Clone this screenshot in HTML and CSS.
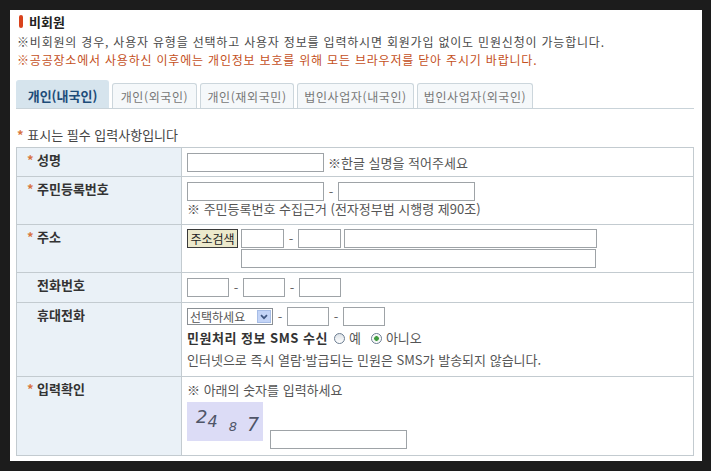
FILE: index.html
```html
<!DOCTYPE html>
<html lang="ko">
<head>
    <meta charset="UTF-8">
    <meta name="viewport" content="width=device-width, initial-scale=1.0">
    <title>비회원 민원신청</title>
    <link rel="stylesheet" href="styles.css">
</head>
<body>
    <div class="page">
        <h2 class="title"><span class="bullet"></span>비회원</h2>
        <p class="notice first">※비회원의 경우, 사용자 유형을 선택하고 사용자 정보를 입력하시면 회원가입 없이도 민원신청이 가능합니다.</p>
        <p class="notice warn">※공공장소에서 사용하신 이후에는 개인정보 보호를 위해 모든 브라우저를 닫아 주시기 바랍니다.</p>

        <ul class="tabs">
            <li class="tab active">개인(내국인)</li>
            <li class="tab">개인(외국인)</li>
            <li class="tab">개인(재외국민)</li>
            <li class="tab">법인사업자(내국인)</li>
            <li class="tab">법인사업자(외국인)</li>
        </ul>

        <p class="required"><span class="star">*</span> 표시는 필수 입력사항입니다</p>

        <div class="form">
            <!-- 성명 -->
            <div class="label"><span class="star">*</span>성명</div>
            <div class="field">
                <div class="line">
                    <input class="text w137" type="text">
                    <span class="hint">※한글 실명을 적어주세요</span>
                </div>
            </div>

            <!-- 주민등록번호 -->
            <div class="label"><span class="star">*</span>주민등록번호</div>
            <div class="field">
                <div class="line">
                    <input class="text w137" type="text">
                    <span class="dash">-</span>
                    <input class="text w137" type="password">
                </div>
                <div class="sub">※ 주민등록번호 수집근거 (전자정부법 시행령 제90조)</div>
            </div>

            <!-- 주소 -->
            <div class="label"><span class="star">*</span>주소</div>
            <div class="field tight">
                <div class="line">
                    <button class="btn" type="button">주소검색</button>
                    <input class="text w43" type="text">
                    <span class="dash">-</span>
                    <input class="text w43" type="text">
                    <input class="text w253 gap" type="text">
                </div>
                <div class="line second">
                    <input class="text w355" type="text">
                </div>
            </div>

            <!-- 전화번호 -->
            <div class="label"><span class="star none"></span>전화번호</div>
            <div class="field">
                <div class="line">
                    <input class="text w42" type="text">
                    <span class="dash">-</span>
                    <input class="text w42" type="text">
                    <span class="dash">-</span>
                    <input class="text w42" type="text">
                </div>
            </div>

            <!-- 휴대전화 -->
            <div class="label"><span class="star none"></span>휴대전화</div>
            <div class="field tight">
                <div class="line">
                    <span class="select">
                        <select>
                            <option>선택하세요</option>
                            <option>010</option>
                            <option>011</option>
                            <option>016</option>
                            <option>017</option>
                            <option>018</option>
                            <option>019</option>
                        </select>
                        <span class="arrow">
                            <svg width="8" height="6" viewBox="0 0 8 6"><polyline points="1,1.2 4,4.2 7,1.2" fill="none" stroke="#3f5680" stroke-width="1.7"/></svg>
                        </span>
                    </span>
                    <span class="dash">-</span>
                    <input class="text w42" type="text">
                    <span class="dash">-</span>
                    <input class="text w42" type="text">
                </div>
                <div class="sms">
                    <strong>민원처리 정보 SMS 수신</strong>
                    <label class="opt"><input class="radio" type="radio" name="sms">예</label>
                    <label class="opt"><input class="radio" type="radio" name="sms" checked>아니오</label>
                </div>
                <div class="sms-note">인터넷으로 즉시 열람·발급되는 민원은 SMS가 발송되지 않습니다.</div>
            </div>

            <!-- 입력확인 -->
            <div class="label"><span class="star">*</span>입력확인</div>
            <div class="field">
                <div class="sub">※ 아래의 숫자를 입력하세요</div>
                <div class="captcha-row">
                    <div class="captcha">
                        <span class="d1">2</span>
                        <span class="d2">4</span>
                        <span class="d3">8</span>
                        <span class="d4">7</span>
                    </div>
                    <input class="text w137 captcha-input" type="text">
                </div>
            </div>
        </div>
    </div>
</body>
</html>
```

FILE: styles.css
```css
body {
    margin: 0;
    padding: 10px 9px 10px 10px;
    background-color: #1c1c1c;
    font-family: "Noto Sans CJK KR", "Noto Sans", sans-serif;
    font-size: 13px;
    color: #555;
}
.page {
    width: 692px;
    height: 451px;
    box-sizing: border-box;
    padding: 1px 8px 0 6px;
    background-color: #fff;
}
.title {
    display: flex;
    align-items: center;
    height: 20px;
    margin: 0;
    font-size: 13px;
    font-weight: bold;
    color: #222;
}
.title .bullet {
    width: 4px;
    height: 13px;
    margin: 0 6px 0 3px;
    border-radius: 2px;
    background-color: #d9421c;
}
.notice {
    margin: 0;
    padding-left: 1px;
    font-size: 12px;
    line-height: 18px;
    letter-spacing: 0.8px;
    color: #4a4a4a;
}
.notice.first {
    margin-top: 2px;
}
.notice.warn {
    color: #c4501c;
}

/* tabs */
.tabs {
    display: flex;
    align-items: flex-end;
    gap: 3px;
    height: 28px;
    margin: 11px 0 0;
    padding: 0;
    list-style: none;
    border-bottom: 1px solid #c9d3d9;
}
.tab {
    box-sizing: border-box;
    height: 25px;
    padding-top: 2px;
    font-size: 12px;
    line-height: 22px;
    letter-spacing: 0.6px;
    text-align: center;
    border: 1px solid #ccd6dc;
    border-bottom: none;
    border-radius: 3px 3px 0 0;
    background-color: #f5f8fa;
    color: #777;
}
.tab:nth-child(1) { width: 93px; }
.tab:nth-child(2) { width: 85px; }
.tab:nth-child(3) { width: 94px; }
.tab:nth-child(4) { width: 117px; }
.tab:nth-child(5) { width: 116px; }
.tab.active {
    height: 28px;
    padding-top: 4px;
    font-size: 13px;
    letter-spacing: 0;
    border-color: #d6e4ed;
    background-color: #d6e4ed;
    color: #1d4c79;
    font-weight: bold;
}

.required {
    margin: 18px 0 4px 1px;
    line-height: 16px;
    color: #444;
}
.star {
    color: #d8743e;
    font-weight: bold;
}

/* form */
.form {
    display: grid;
    grid-template-columns: 165px 1fr;
    grid-template-rows: 29px 48px 48px 30px 74px 79px;
    border: 1px solid #c3cbd0;
    border-bottom: none;
}
.label,
.field {
    box-sizing: border-box;
    border-bottom: 1px solid #c3cbd0;
    line-height: 16px;
}
.label {
    padding: 4px 0 0 10px;
    border-right: 1px solid #c3cbd0;
    background-color: #eaf1f7;
    color: #333;
    font-weight: bold;
}
.label .star {
    display: inline-block;
    width: 10px;
}
.field {
    padding: 5px 5px 0;
}
.field.tight {
    padding-top: 4px;
}
.line {
    display: flex;
    align-items: center;
    height: 19px;
}
.line.second {
    margin-top: 1px;
    padding-left: 54px;
}
.text {
    box-sizing: border-box;
    height: 19px;
    margin: 0;
    padding: 0 2px;
    border: 1px solid #9ea3a7;
    font: inherit;
    color: #333;
}
.w137 { width: 137px; }
.w43 { width: 43px; }
.w42 { width: 42px; }
.w253 { width: 253px; }
.w355 { width: 355px; }
.gap { margin-left: 3px; }
.dash {
    width: 14px;
    text-align: center;
    color: #666;
}
.hint {
    margin-left: 4px;
}
.sub {
    line-height: 16px;
}
.btn {
    box-sizing: border-box;
    width: 51px;
    height: 19px;
    margin-right: 3px;
    padding: 0;
    border: 1px solid #3a3a3a;
    background-color: #ece9cc;
    font: inherit;
    font-size: 12px;
    color: #222;
}

/* select box */
.select {
    display: inline-flex;
    align-items: center;
    box-sizing: border-box;
    width: 86px;
    height: 17px;
    border: 1px solid #8a8f94;
    background-color: #fff;
}
.select select {
    width: 70px;
    height: 15px;
    padding: 0 0 0 2px;
    border: none;
    background: none;
    font: inherit;
    font-size: 12px;
    line-height: 15px;
    color: #555;
    appearance: none;
    outline: none;
}
.select .arrow {
    display: flex;
    align-items: center;
    justify-content: center;
    box-sizing: border-box;
    width: 14px;
    height: 13px;
    margin: 0 1px 0 auto;
    border: 1px solid #a7bde6;
    background-color: #c3d4f7;
}

.sms {
    display: flex;
    align-items: center;
    height: 18px;
    margin-top: 3px;
    color: #333;
}
.sms strong {
    letter-spacing: 0.5px;
}
.opt {
    display: flex;
    align-items: center;
    margin-left: 6px;
    color: #555;
}
.opt + .opt {
    margin-left: 10px;
}
.radio {
    box-sizing: border-box;
    width: 11px;
    height: 11px;
    margin: 0 4px 0 0;
    border: 1px solid #6b7d91;
    border-radius: 50%;
    background: linear-gradient(#dde2e7, #fff);
    appearance: none;
}
.radio:checked {
    background: radial-gradient(circle, #3f9b3f 0 2px, #e6efe6 2.6px, #fff 4px);
}
.sms-note {
    margin-top: 5px;
    line-height: 16px;
}

/* captcha */
.captcha-row {
    display: flex;
    align-items: flex-start;
    margin-top: 4px;
}
.captcha {
    display: flex;
    align-items: flex-start;
    width: 76px;
    height: 39px;
    background-color: #dcdcf6;
    font-family: "DejaVu Sans", sans-serif;
    font-style: italic;
    line-height: 1;
    color: #4f5568;
}
.captcha .d1 { font-size: 18px; margin: 6px 0 0 9px; }
.captcha .d2 { font-size: 16px; margin: 12px 0 0 0; }
.captcha .d3 { font-size: 13px; margin: 18px 0 0 11px; }
.captcha .d4 { font-size: 19px; margin: 13px 0 0 10px; }
.captcha-input {
    margin: 28px 0 0 7px;
}
```
